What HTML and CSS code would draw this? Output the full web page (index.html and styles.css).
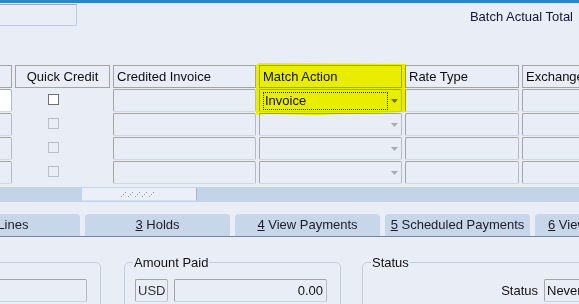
FILE: index.html
```html
<html>
<head>
<link rel="stylesheet" href="styles.css">
</head>
<body>

<div class="titleBar"></div>

<div class="topRow">
  <div class="topField"></div>
  <div class="batchLabel">Batch Actual Total</div>
</div>

<div class="gridWrap">
  <div class="grid">
    <div class="th"></div>
    <div class="th center">Quick Credit</div>
    <div class="th">Credited Invoice</div>
    <div class="th">Match Action</div>
    <div class="th">Rate Type</div>
    <div class="th">Exchange</div>

    <div class="cell white"></div>
    <div class="checkCell"><span class="check on"></span></div>
    <div class="cell"></div>
    <div class="cell combo"><span class="focus">Invoice</span><svg class="arrow" width="7" height="4"><polygon points="0,0 7,0 3.5,4" fill="#6a6a6a"/></svg></div>
    <div class="cell"></div>
    <div class="cell"></div>

    <div class="cell"></div>
    <div class="checkCell"><span class="check"></span></div>
    <div class="cell"></div>
    <div class="cell combo"><svg class="arrow" width="7" height="4"><polygon points="0,0 7,0 3.5,4" fill="#ababab"/></svg></div>
    <div class="cell"></div>
    <div class="cell"></div>

    <div class="cell"></div>
    <div class="checkCell"><span class="check"></span></div>
    <div class="cell"></div>
    <div class="cell combo"><svg class="arrow" width="7" height="4"><polygon points="0,0 7,0 3.5,4" fill="#ababab"/></svg></div>
    <div class="cell"></div>
    <div class="cell"></div>

    <div class="cell"></div>
    <div class="checkCell"><span class="check"></span></div>
    <div class="cell"></div>
    <div class="cell combo"><svg class="arrow" width="7" height="4"><polygon points="0,0 7,0 3.5,4" fill="#ababab"/></svg></div>
    <div class="cell"></div>
    <div class="cell"></div>
  </div>
  <!-- marker highlight drawn over the Match Action column -->
  <div class="highlight"></div>
</div>

<div class="hScroll">
  <div class="thumb">
    <svg width="36" height="5">
      <g fill="#8595ad">
        <rect x="4" y="0" width="1" height="1"/><rect x="2" y="2" width="1" height="1"/><rect x="0" y="4" width="1" height="1"/>
        <rect x="11" y="0" width="1" height="1"/><rect x="9" y="2" width="1" height="1"/><rect x="7" y="4" width="1" height="1"/>
        <rect x="18" y="0" width="1" height="1"/><rect x="16" y="2" width="1" height="1"/><rect x="14" y="4" width="1" height="1"/>
        <rect x="25" y="0" width="1" height="1"/><rect x="23" y="2" width="1" height="1"/><rect x="21" y="4" width="1" height="1"/>
        <rect x="32" y="0" width="1" height="1"/><rect x="30" y="2" width="1" height="1"/><rect x="28" y="4" width="1" height="1"/>
      </g>
    </svg>
  </div>
</div>

<div class="tabs">
  <div class="tab"><u>2</u> Lines</div>
  <div class="tab"><u>3</u> Holds</div>
  <div class="tab"><u>4</u> View Payments</div>
  <div class="tab"><u>5</u> Scheduled Payments</div>
  <div class="tab"><u>6</u> View Prepayments</div>
</div>

<div class="groups">
  <fieldset class="group groupLeft">
    <legend>&nbsp;</legend>
    <div class="fieldRow">
      <div class="field grow"></div>
    </div>
  </fieldset>
  <fieldset class="group groupAmount">
    <legend>Amount Paid</legend>
    <div class="fieldRow">
      <div class="field currency">USD</div>
      <div class="field grow amount">0.00</div>
    </div>
  </fieldset>
  <fieldset class="group groupStatus">
    <legend>Status</legend>
    <div class="fieldRow">
      <div class="statusLabel">Status</div>
      <div class="field grow">Never Validated</div>
    </div>
  </fieldset>
</div>

</body>
</html>
```

FILE: styles.css
```css
html, body {
  margin: 0;
  overflow: hidden;
}

body {
  width: 579px;
  height: 304px;
  background: #e9edf6;
  font-family: "Liberation Sans", Arial, sans-serif;
  font-size: 13px;
  line-height: 15px;
  color: #111;
}

.titleBar {
  height: 3px;
  background: #2e86c8;
}

.topRow {
  display: flex;
  justify-content: space-between;
  align-items: flex-start;
  margin-top: 1px;
  height: 22px;
}

.topField {
  width: 97px;
  height: 22px;
  margin-left: -20px;
  box-sizing: border-box;
  border: 1px solid;
  border-color: #a6a6a6 #b9cbe4 #b9cbe4 #b9cbe4;
  border-radius: 0 0 2px 0;
}

.batchLabel {
  padding: 5px 6px 0 0;
  color: #15153a;
}

/* multi-row block */
.gridWrap {
  position: relative;
  margin-top: 39px;
}

.grid {
  display: grid;
  grid-template-columns: 60px 95px 143px 143px 114px 100px;
  grid-auto-rows: 23px;
  column-gap: 3px;
  row-gap: 1px;
  margin-left: -48px;
}

.th {
  box-sizing: border-box;
  border: 1px solid #a3a3a3;
  padding: 0 3px;
  line-height: 21px;
  white-space: nowrap;
  overflow: hidden;
  color: #0d0d0d;
}

.th.center {
  text-align: center;
}

.cell {
  box-sizing: border-box;
  border: 1px solid;
  border-color: #a4a4a4 #b6bac2 #cfd8e6 #a4a4a4;
  border-radius: 2px;
}

.cell.white {
  background: #fff;
}

.checkCell {
  padding: 5px 0 0 33px;
}

.check {
  display: block;
  width: 11px;
  height: 11px;
  box-sizing: border-box;
  border: 1px solid #babec6;
}

.check.on {
  border-color: #707070;
  background: #fff;
}

.combo {
  display: flex;
  align-items: center;
  justify-content: flex-end;
  gap: 3px;
  padding: 0 3px;
}

.focus {
  flex: 1;
  align-self: flex-start;
  margin-top: 2px;
  height: 18px;
  box-sizing: border-box;
  border: 1px dotted #222;
  padding-left: 1px;
  line-height: 16px;
  color: #111;
}

.arrow {
  display: block;
  flex: none;
}

.highlight {
  position: absolute;
  left: 256px;
  top: -2px;
  width: 150px;
  height: 52px;
  background: #ffff00;
  mix-blend-mode: multiply;
  border-radius: 2px;
  clip-path: polygon(0 2px, 3px 0, 100% 1px, 100% 94%, 40% 100%, 8% 98%, 0 100%);
}

/* horizontal scrollbar */
.hScroll {
  height: 15px;
  margin-top: 3px;
  padding-top: 1px;
  box-sizing: border-box;
  background: #c4d4e8;
}

.thumb {
  display: flex;
  align-items: center;
  justify-content: center;
  width: 115px;
  height: 13px;
  margin-left: 82px;
  box-sizing: border-box;
  background: #ebeff7;
  border-right: 1px solid #a2b2c8;
  border-bottom: 1px solid #d5deea;
}

.thumb svg {
  display: block;
}

/* tabs */
.tabs {
  display: flex;
  gap: 5px;
  margin: 12px 0 0 -65px;
  border-bottom: 1px solid #74869f;
}

.tab {
  flex: 0 0 145px;
  height: 22px;
  line-height: 22px;
  text-align: center;
  white-space: nowrap;
  overflow: hidden;
  background: #c8d6ea;
  border-radius: 4px 4px 0 0;
  color: #1c1c2a;
}

/* lower region groups */
.groups {
  display: flex;
  align-items: flex-start;
  margin-top: 18px;
}

.group {
  flex: none;
  margin: 0;
  min-width: 0;
  box-sizing: border-box;
  border: 1px solid #c2cfe3;
  border-radius: 5px;
  padding: 9px 13px 10px 10px;
}

.group legend {
  padding: 0 1px;
  margin-left: -2px;
  line-height: 15px;
  color: #111;
}

.groupLeft {
  width: 161px;
  margin-left: -60px;
}

.groupAmount {
  width: 217px;
  margin-left: 23px;
}

.groupStatus {
  width: 300px;
  margin-left: 21px;
}

.fieldRow {
  display: flex;
  align-items: center;
  gap: 6px;
}

.field {
  height: 23px;
  box-sizing: border-box;
  border: 1px solid;
  border-color: #a4a4a4 #b6bac2 #c9d2df #a4a4a4;
  border-radius: 2px;
  padding: 0 2px;
  line-height: 21px;
  white-space: nowrap;
  overflow: hidden;
}

.grow {
  flex: 1;
}

.currency {
  width: 33px;
  flex: none;
  color: #333;
}

.amount {
  text-align: right;
  padding-right: 3px;
}

.statusLabel {
  width: 165px;
  flex: none;
  text-align: right;
}
```
